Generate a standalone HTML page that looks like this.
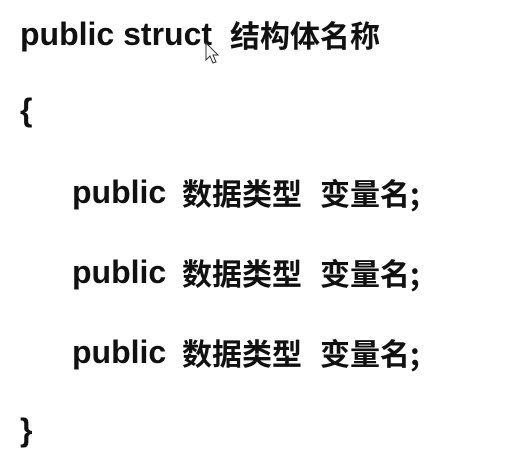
<html><head><style>
body{margin:0;width:508px;height:465px;background:#fff;position:relative;overflow:hidden;font-family:"Liberation Sans","Noto Sans CJK SC",sans-serif;font-weight:bold;font-size:32px;color:#111}
div{position:absolute;line-height:32px;white-space:pre}
span{position:absolute;font-size:30px;font-family:"Noto Sans CJK SC",sans-serif;top:0}
</style></head><body>
<div style="left:20px;top:18px">public struct<span style="left:210px">结构体名称</span></div>
<div style="left:20px;top:94px">{</div>
<div style="left:72px;top:176px">public<span style="left:110px">数据类型</span><span style="left:248px">变量名;</span></div>
<div style="left:72px;top:256px">public<span style="left:110px">数据类型</span><span style="left:248px">变量名;</span></div>
<div style="left:72px;top:336px">public<span style="left:110px">数据类型</span><span style="left:248px">变量名;</span></div>
<div style="left:20px;top:414px">}</div>
<svg style="position:absolute;left:205px;top:42px" width="16" height="24" viewBox="0 0 16 24"><path d="M1 1 L1 18 L5 14 L8 21 L11 20 L8 13 L13 13 Z" fill="#fff" stroke="#333" stroke-width="1"/></svg>
</body></html>
